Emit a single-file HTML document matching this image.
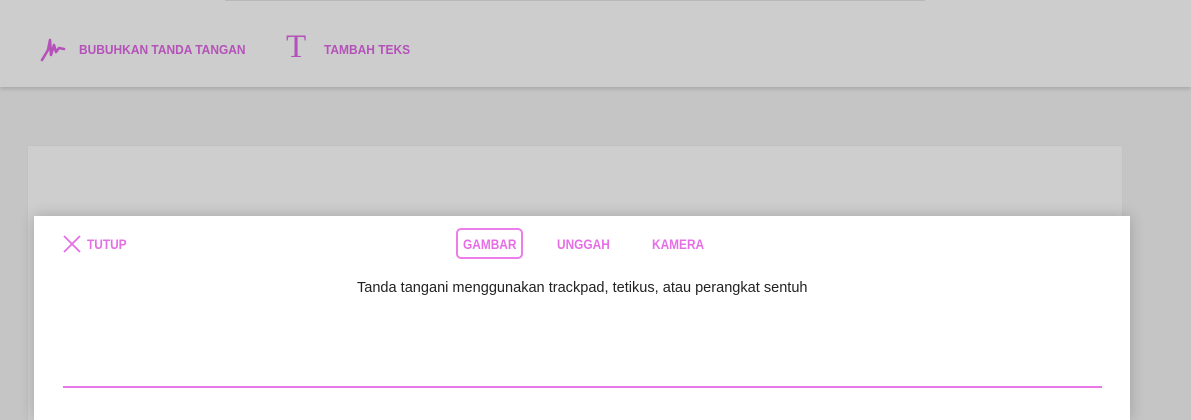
<!DOCTYPE html>
<html><head><meta charset="utf-8"><style>
*{margin:0;padding:0;box-sizing:border-box}
html{width:1191px;height:420px;overflow:hidden}
body{width:1191px;height:420px;overflow:hidden;background:#c5c5c5;font-family:"Liberation Sans",sans-serif;position:relative}
.top{position:absolute;left:0;top:0;width:1191px;height:87px;background:#cdcdcd;box-shadow:0 2px 4px rgba(0,0,0,.15)}
.topline{position:absolute;left:225px;top:0;width:700px;height:1px;background:#b8b8b8}
.tb{position:absolute;top:42px;font-size:13px;font-weight:bold;color:#b552b9;transform:scaleX(.92);transform-origin:left;white-space:nowrap}
.card{position:absolute;left:27px;top:145px;width:1096px;height:275px;background:#cecece;border:1px solid #c2c2c2;border-bottom:none}
.modal{position:absolute;left:34px;top:216px;width:1096px;height:204px;background:#fff;box-shadow:0 0 14px rgba(0,0,0,.2)}
.m{position:absolute;font-size:13.5px;font-weight:bold;color:#e66fe6;white-space:nowrap;transform:scaleX(.88);transform-origin:left}
.btn{position:absolute;left:422px;top:12px;width:67px;height:31px;border:2px solid #eb7eeb;border-radius:5px}
.msg{position:absolute;left:0;width:1096px;top:63px;text-align:center;font-size:15px;color:#222}
.line{position:absolute;left:29px;top:170px;width:1039px;height:2px;background:#e878e8}
</style></head><body>
<div class="top"><div class="topline"></div>
<svg style="position:absolute;left:40px;top:37px" width="26" height="26" viewBox="0 0 26 26"><path d="M2 23 L8 13 L10 3 L11 18 L14 8 L16 15 L19 11 L24 12" fill="none" stroke="#b552b9" stroke-width="2.6" stroke-linejoin="round" stroke-linecap="round"/></svg>
<div class="tb" style="left:79px">BUBUHKAN TANDA TANGAN</div>
<div style="position:absolute;left:286px;top:31px;font-family:'Liberation Serif',serif;font-size:33px;color:#b552b9;line-height:33px">T</div>
<div class="tb" style="left:324px">TAMBAH TEKS</div>
</div>
<div class="card"></div>
<div class="modal">
<svg style="position:absolute;left:28px;top:18px" width="20" height="20" viewBox="0 0 20 20"><path d="M2 2L18 18M18 2L2 18" stroke="#e66fe6" stroke-width="1.8"/></svg>
<div class="m" style="left:53px;top:21px">TUTUP</div>
<div class="btn"></div>
<div class="m" style="left:429px;top:21px">GAMBAR</div>
<div class="m" style="left:523px;top:21px">UNGGAH</div>
<div class="m" style="left:618px;top:21px">KAMERA</div>
<div class="msg"><span style="display:inline-block;transform:scaleX(.97)">Tanda tangani menggunakan trackpad, tetikus, atau perangkat sentuh</span></div>
<div class="line"></div>
</div>
</body></html>
